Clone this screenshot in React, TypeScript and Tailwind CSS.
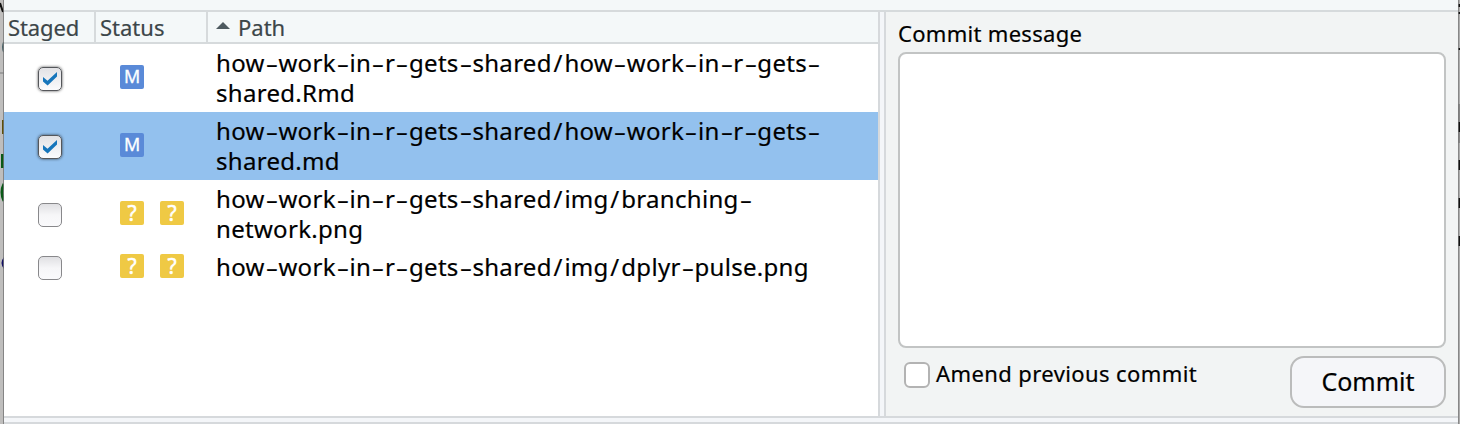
import { Fragment } from 'react';

type FileEntry = {
  lines: string[];
  staged: boolean;
  selected?: boolean;
  badges: string[];
};

const files: FileEntry[] = [
  { lines: ['how-work-in-r-gets-shared/how-work-in-r-gets-', 'shared.Rmd'], staged: true, badges: ['M'] },
  { lines: ['how-work-in-r-gets-shared/how-work-in-r-gets-', 'shared.md'], staged: true, selected: true, badges: ['M'] },
  { lines: ['how-work-in-r-gets-shared/img/branching-', 'network.png'], staged: false, badges: ['?', '?'] },
  { lines: ['how-work-in-r-gets-shared/img/dplyr-pulse.png'], staged: false, badges: ['?', '?'] },
];

function PathLine({ text }: { text: string }) {
  return (
    <div className="h-[30px] whitespace-nowrap">
      {text.split(/([-/])/).map((part, i) => {
        if (part === '-') {
          return (
            <span key={i} className="inline-block w-[13.8px] scale-x-160 text-center tracking-normal">
              -
            </span>
          );
        }
        if (part === '/') {
          return (
            <span key={i} className="px-[1.7px]">
              /
            </span>
          );
        }
        return <Fragment key={i}>{part}</Fragment>;
      })}
    </div>
  );
}

function StageBox({ checked }: { checked: boolean }) {
  return (
    <div
      className={
        checked
          ? 'flex size-6 items-center justify-center rounded-[5px] border border-[#55575b] bg-linear-to-b from-[#e2e2e5] to-[#fbfbfd] shadow-[0_0_3px_rgba(0,0,0,0.7)]'
          : 'size-6 rounded-[5px] border border-[#88888b] bg-linear-to-b from-[#e0e0e3] via-[#f6f6f8] to-[#fafafc]'
      }
    >
      {checked && (
        <svg viewBox="0 0 16 14" className="h-[14px] w-4 shrink-0" fill="#1675bb">
          <path d="M1 5 L5.5 8.7 L15 0 V4.6 L5.6 13.6 L1 9.5 Z" />
        </svg>
      )}
    </div>
  );
}

function Badge({ label }: { label: string }) {
  return (
    <div
      className={
        label === 'M'
          ? "flex size-6 items-center justify-center rounded-[2px] bg-[#5a8ad8] font-['Open_Sans',sans-serif] text-[18px] leading-[23px] text-white [-webkit-text-stroke:0.4px_white]"
          : "flex size-6 items-center justify-center rounded-[2px] bg-[#efc944] font-['Noto_Sans',sans-serif] text-[21px] leading-6 text-white [-webkit-text-stroke:0.5px_white]"
      }
    >
      <span className={label === 'M' ? '-mt-0.5' : '-mt-px'}>{label}</span>
    </div>
  );
}

function FileRow({ file }: { file: FileEntry }) {
  const double = file.lines.length === 2;
  return (
    <div className={`flex ${double ? 'h-[68px]' : 'h-[38px]'} ${file.selected ? 'bg-[#93c1ee]' : 'bg-white'}`}>
      <div className={`w-[116px] pl-[34px] ${double ? 'pt-[23px]' : 'pt-2'}`}>
        <StageBox checked={file.staged} />
      </div>
      <div className={`flex w-24 gap-4 ${double ? 'pt-[21px]' : 'pt-1.5'}`}>
        {file.badges.map((b, i) => (
          <Badge key={i} label={b} />
        ))}
      </div>
      <div className="pt-1 text-[24px] leading-[30px] tracking-[0.3px] text-black [-webkit-text-stroke:0.2px_black]">
        {file.lines.map((line) => (
          <PathLine key={line} text={line} />
        ))}
      </div>
    </div>
  );
}

function LeftEdge() {
  return (
    <svg className="h-[424px] w-1 shrink-0" viewBox="0 0 4 424">
      <rect width="4" height="424" fill="#bfbebd" />
      <path d="M0 73H4" stroke="#9c9c9c" strokeWidth="2" />
      <path d="M0 3L3 12" stroke="#111" strokeWidth="2" />
      <path d="M4 42Q2 47 4 52" stroke="#49646a" fill="none" strokeWidth="2" />
      <path d="M2 120H4V134H2Z" fill="#5c5008" />
      <path d="M1 154H4V168H1Z" fill="#095a17" />
      <path d="M4 184Q0 192 4 201" stroke="#095a17" fill="none" strokeWidth="3" />
      <path d="M4 257Q-1 263 4 269Z" fill="#131066" />
      <path d="M3.5 0V424" stroke="#777" strokeOpacity="0.8" />
    </svg>
  );
}

function RightEdge() {
  return (
    <svg className="h-[424px] w-0.5 shrink-0" viewBox="0 0 2 424">
      <rect width="2" height="424" fill="#acacac" />
      <path d="M0 104H2V143H0Z" fill="#858585" />
      <path d="M0 4H2V7H0ZM0 12H2V14H0ZM0 48H2V50H0ZM0 122H2V132H0ZM0 160H2V170H0ZM0 198H2V208H0ZM0 236H2V246H0Z" fill="#111" />
      <path d="M0.5 0V424" stroke="#777" strokeOpacity="0.7" />
    </svg>
  );
}

export default function App() {
  return (
    <div className="flex h-[424px] w-[1460px] overflow-hidden bg-[#f4f8f9] font-['Noto_Sans',sans-serif] text-black">
      <LeftEdge />
      <div className="flex w-[1454px] flex-col">
        <div className="h-3 border-b-2 border-[#d6dadc]" />
        <div className="flex h-[404px]">
          <div className="w-[874px] bg-white">
            <div className="flex h-8 border-b-2 border-[#d6dadc] bg-[#f4f8f9] text-[22px] leading-[31px] text-[#3c4649] [-webkit-text-stroke:0.2px_#3c4649]">
              <div className="w-[92px] border-r-2 border-[#d6dadc] pl-1 tracking-[-0.1px]">Staged</div>
              <div className="w-[112px] border-r-2 border-[#d6dadc] pl-1">Status</div>
              <div className="flex pl-2">
                <svg viewBox="0 0 14 7" className="mt-[10px] mr-2 h-[7px] w-[14px]" fill="#4e5a60">
                  <path d="M7 0L14 7H0Z" />
                </svg>
                <span>Path</span>
              </div>
            </div>
            {files.map((file, i) => (
              <FileRow key={i} file={file} />
            ))}
          </div>
          <div className="w-2 border-x-2 border-[#d6d9dc] bg-[#f4f6f9]" />
          <div className="flex w-[572px] flex-col bg-[#f2f4f4] pr-3 pl-3 [-webkit-text-stroke:0.2px_black]">
            <div className="h-10 pt-[6px] text-[22px] leading-[31px] tracking-[0.3px]">Commit message</div>
            <div className="h-[296px] rounded-[8px] border-2 border-[#c2c4c4] bg-white" />
            <div className="flex justify-between">
              <div className="flex pt-[14px] pl-1.5">
                <div className="size-[26px] rounded-[6px] border-2 border-[#b3b3b3] bg-white" />
                <span className="-mt-1 pl-1.5 text-[22px] leading-[31px] tracking-[0.4px]">Amend previous commit</span>
              </div>
              <button className="mt-2 h-[52px] w-[156px] rounded-[14px] border-2 border-[#bbbcbc] bg-[#f5f6f9] pb-0.5 text-[25px] leading-[46px]">
                Commit
              </button>
            </div>
          </div>
        </div>
        <div className="h-2 border-y-2 border-[#d6d9dc] bg-[#f4f6f9]" />
      </div>
      <RightEdge />
    </div>
  );
}
